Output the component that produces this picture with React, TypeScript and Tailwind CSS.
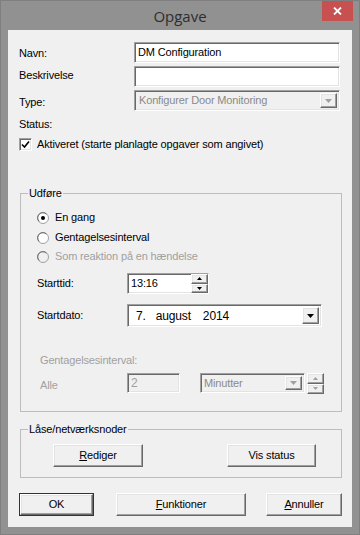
const sunken =
  "border border-t-[#a0a0a0] border-l-[#a0a0a0] border-b-white border-r-white shadow-[inset_1px_1px_0_#696969,inset_-1px_-1px_0_#e3e3e3]";
const raised =
  "border border-t-white border-l-white border-b-[#696969] border-r-[#696969] shadow-[inset_-1px_-1px_0_#a0a0a0,inset_1px_1px_0_#e3e3e3] bg-[#f0f0f0]";

function Arrow({ up = false, color = "#000", size = "big" }: { up?: boolean; color?: string; size?: "big" | "small" }) {
  const w = size === "big" ? 7 : 5;
  const h = size === "big" ? 4 : 3;
  return (
    <svg width={w} height={h} viewBox={`0 0 ${w} ${h}`}>
      <polygon points={up ? `0,${h} ${w},${h} ${w / 2},0` : `0,0 ${w},0 ${w / 2},${h}`} fill={color} />
    </svg>
  );
}

function DropButton({ disabled = false }: { disabled?: boolean }) {
  return (
    <div className={`${raised} w-[17px] self-stretch m-[2px] flex items-center justify-center`}>
      <Arrow color={disabled ? "#a0a0a0" : "#000"} />
    </div>
  );
}

function Spin({ disabled = false }: { disabled?: boolean }) {
  const c = disabled ? "#a0a0a0" : "#000";
  return (
    <div className="flex flex-col w-[17px] self-stretch">
      <div className={`${raised} flex-1 flex items-center justify-center`}>
        <Arrow up color={c} size="small" />
      </div>
      <div className={`${raised} flex-1 flex items-center justify-center`}>
        <Arrow color={c} size="small" />
      </div>
    </div>
  );
}

function Radio({ checked = false, disabled = false, label }: { checked?: boolean; disabled?: boolean; label: string }) {
  return (
    <div className="flex items-center h-[13px]">
      <svg width="12" height="12" viewBox="0 0 12 12" className="shrink-0">
        <circle cx="6" cy="6" r="5.5" fill={disabled ? "#f0f0f0" : "#fff"} stroke="#a0a0a0" />
        <path d="M2.2 9.4 A5 5 0 0 1 9.4 2.2" stroke="#696969" fill="none" />
        {checked && <circle cx="6" cy="6" r="2" fill="#000" />}
      </svg>
      <span className={`ml-[6px] ${disabled ? "text-[#a0a0a0]" : "text-black"}`}>{label}</span>
    </div>
  );
}

function Btn({ children, cls }: { children: React.ReactNode; cls: string }) {
  return (
    <div className={`${raised} h-[23px] flex items-center justify-center ${cls}`}>{children}</div>
  );
}

function Group({ label, cls, children }: { label: string; cls: string; children: React.ReactNode }) {
  return (
    <div className={`relative ml-[12px] w-[322px] border border-[#bdbdbd] ${cls}`}>
      <span className="absolute left-[7px] top-[-8px] px-[1px] bg-[#f0f0f0] text-black leading-[14px]">{label}</span>
      {children}
    </div>
  );
}

export default function App() {
  return (
    <div className="w-[360px] h-[535px] bg-[#919191] border border-[#7f7f7f] flex flex-col font-['Liberation_Sans',Arial,sans-serif] text-[11px] tracking-[-0.15px] text-black">
      <div className="relative h-[29px] shrink-0 flex items-center justify-center">
        <span className="font-['Open_Sans',sans-serif] text-[15px] tracking-normal text-[#2e2e2e] mt-[1px]">Opgave</span>
        <div className="absolute right-[6px] top-0 w-[31px] h-[20px] bg-[#c75050] flex items-center justify-center">
          <svg width="9" height="8" viewBox="0 0 9 8">
            <path d="M1 0.5 L8 7.5 M8 0.5 L1 7.5" stroke="#fff" strokeWidth="1.8" />
          </svg>
        </div>
      </div>

      <div className="mx-[7px] h-[497px] bg-[#f0f0f0] flex flex-col">
        <div className="pt-[12px] pl-[11px]">
          <div className="flex h-[21px]">
            <span className="w-[115px] pt-[3px]">Navn:</span>
            <div className={`${sunken} w-[206px] bg-white flex items-center pl-[3px]`}>DM Configuration</div>
          </div>
          <div className="flex h-[21px] mt-[3px]">
            <span className="w-[115px] pt-[1px]">Beskrivelse</span>
            <div className={`${sunken} w-[206px] bg-white`} />
          </div>
          <div className="flex h-[21px] mt-[3px]">
            <span className="w-[115px] pt-[4px]">Type:</span>
            <div className={`${sunken} w-[206px] bg-[#f0f0f0] flex items-center`}>
              <span className="flex-1 pl-[4px] text-[#8a8a8a]">Konfigurer Door Monitoring</span>
              <DropButton disabled />
            </div>
          </div>
          <div className="h-[13px] mt-[5px]">Status:</div>
          <div className="flex items-center h-[13px] mt-[9px]">
            <div className={`${sunken} w-[13px] h-[13px] bg-white flex items-center justify-center`}>
              <svg width="9" height="9" viewBox="0 0 9 9">
                <path d="M1 4.5 L3.5 7 L8 1.5" stroke="#000" strokeWidth="1.6" fill="none" />
              </svg>
            </div>
            <span className="ml-[5px]">Aktiveret (starte planlagte opgaver som angivet)</span>
          </div>
        </div>

        <Group label="Udføre" cls="mt-[42px] h-[219px]">
          <div className="pt-[17px] pl-[16px] flex flex-col">
            <Radio checked label="En gang" />
            <div className="mt-[7px]">
              <Radio label="Gentagelsesinterval" />
            </div>
            <div className="mt-[6px]">
              <Radio disabled label="Som reaktion på en hændelse" />
            </div>
            <div className="flex h-[21px] mt-[10px] items-center">
              <span className="w-[90px]">Starttid:</span>
              <div className={`${sunken} w-[82px] h-[21px] bg-white flex items-stretch`}>
                <span className="flex-1 pl-[3px] flex items-center">13:16</span>
                <Spin />
              </div>
            </div>
            <div className="flex h-[23px] mt-[10px] items-center">
              <span className="w-[90px]">Startdato:</span>
              <div className={`${sunken} w-[195px] h-[23px] bg-white flex items-stretch`}>
                <span className="flex-1 pl-[8px] flex items-center text-[12px]">
                  <span>7.</span>
                  <span className="ml-[10px]">august</span>
                  <span className="ml-[12px]">2014</span>
                </span>
                <DropButton />
              </div>
            </div>
            <div className="h-[13px] mt-[25px] pl-[3px] text-[#a0a0a0]">Gentagelsesinterval:</div>
            <div className="flex h-[20px] mt-[8px] items-center text-[#a0a0a0]">
              <span className="w-[90px] pl-[3px] pt-[4px]">Alle</span>
              <div className={`${sunken} w-[53px] h-[20px] bg-[#f0f0f0] flex items-center pl-[3px] text-[12px]`}>2</div>
              <div className={`${sunken} ml-[20px] w-[105px] h-[20px] bg-[#f0f0f0] flex items-center`}>
                <span className="flex-1 pl-[3px] text-[#8a8a8a]">Minutter</span>
                <DropButton disabled />
              </div>
              <div className="ml-[2px] h-[21px] mt-[1px] flex">
                <Spin disabled />
              </div>
            </div>
          </div>
        </Group>

        <Group label="Låse/netværksnoder" cls="mt-[17px] h-[49px]">
          <div className="flex pt-[14px] pl-[32px]">
            <Btn cls="w-[90px]">
              <span>
                <span className="underline">R</span>ediger
              </span>
            </Btn>
            <Btn cls="w-[89px] ml-[84px]">Vis status</Btn>
          </div>
        </Group>

        <div className="flex mt-[15px] pl-[11px]">
          <div className="w-[75px] h-[23px] border border-[#333]">
            <div className={`${raised} h-full flex items-center justify-center`}>OK</div>
          </div>
          <Btn cls="w-[130px] ml-[22px]">
            <span>
              <span className="underline">F</span>unktioner
            </span>
          </Btn>
          <Btn cls="w-[76px] ml-[20px]">
            <span>
              <span className="underline">A</span>nnuller
            </span>
          </Btn>
        </div>
      </div>
    </div>
  );
}
